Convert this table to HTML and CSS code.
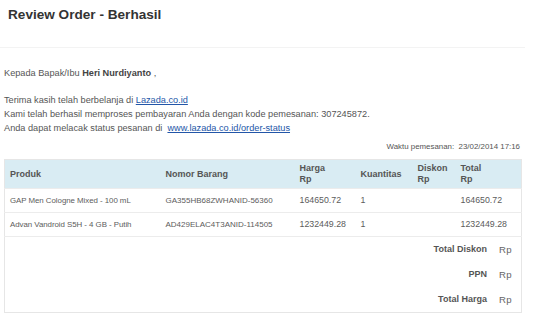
FILE: index.html
```html
<!DOCTYPE html>
<html>
<head>
<meta charset="utf-8">
<link rel="stylesheet" href="styles.css">
</head>
<body>
<div class="page">
  <h1 class="title">Review Order - Berhasil</h1>
  <div class="sep"></div>
  <p class="greet">Kepada Bapak/Ibu <b>Heri Nurdiyanto</b> ,</p>
  <p class="msg">Terima kasih telah berbelanja di <a href="#">Lazada.co.id</a><br>
  Kami telah berhasil memproses pembayaran Anda dengan kode pemesanan: 307245872.<br>
  Anda dapat melacak status pesanan di &nbsp;<a href="#">www.lazada.co.id/order-status</a></p>
  <div class="time">Waktu pemesanan: &nbsp;23/02/2014 17:16</div>
  <table class="order">
    <colgroup>
      <col class="c1"><col class="c2"><col class="c3"><col class="c4"><col class="c5"><col class="c6">
    </colgroup>
    <thead>
      <tr>
        <th>Produk</th>
        <th>Nomor Barang</th>
        <th>Harga<br>Rp</th>
        <th>Kuantitas</th>
        <th>Diskon<br>Rp</th>
        <th>Total<br>Rp</th>
      </tr>
    </thead>
    <tbody>
      <tr class="item">
        <td class="name">GAP Men Cologne Mixed - 100 mL</td>
        <td class="code">GA355HB68ZWHANID-56360</td>
        <td class="num">164650.72</td>
        <td class="num">1</td>
        <td></td>
        <td class="num tot">164650.72</td>
      </tr>
      <tr class="item">
        <td class="name">Advan Vandroid S5H - 4 GB - Putih</td>
        <td class="code">AD429ELAC4T3ANID-114505</td>
        <td class="num">1232449.28</td>
        <td class="num">1</td>
        <td></td>
        <td class="num tot">1232449.28</td>
      </tr>
      <tr class="sum first">
        <td colspan="6"><div class="sumrow"><span class="lbl">Total Diskon</span><span class="rp">Rp</span></div></td>
      </tr>
      <tr class="sum">
        <td colspan="6"><div class="sumrow"><span class="lbl">PPN</span><span class="rp">Rp</span></div></td>
      </tr>
      <tr class="sum last">
        <td colspan="6"><div class="sumrow"><span class="lbl">Total Harga</span><span class="rp">Rp</span></div></td>
      </tr>
    </tbody>
  </table>
</div>
</body>
</html>
```
FILE: styles.css
```css
html, body {
  margin: 0;
  padding: 0;
  background: #fff;
}
body {
  font-family: "Liberation Sans", Arial, sans-serif;
  color: #555;
  font-size: 9.2px;
}
.page {
  padding: 0 4px;
  width: 517px;
}
.title {
  margin: 0;
  padding: 7px 0 0 4px;
  font-size: 13.6px;
  line-height: 15px;
  color: #333;
  font-weight: bold;
}
.sep {
  margin: 25px -4px 0;
  height: 1px;
  background: #f3f3f3;
}
.greet {
  margin: 18px 0 0;
  line-height: 14px;
}
.greet b {
  color: #444;
}
.msg {
  margin: 13px 0 0;
  line-height: 14px;
}
.msg a {
  color: #2356a8;
  text-decoration: underline;
}
.time {
  margin-top: 6px;
  text-align: right;
  font-size: 7.9px;
  line-height: 12px;
  padding-right: 1px;
}
.order {
  margin-top: 6px;
  width: 517px;
  border-collapse: collapse;
  border: 1px solid #e6e6e6;
  font-size: 9px;
  table-layout: fixed;
}
.c1 { width: 156px; }
.c2 { width: 134px; }
.c3 { width: 61px; }
.c4 { width: 57px; }
.c5 { width: 43px; }
.c6 { width: 66px; }
.order th {
  background: #d9ecf3;
  text-align: left;
  font-weight: bold;
  color: #555;
  padding: 3px 5px;
  line-height: 11px;
  height: 22px;
  font-size: 9px;
}
.order td {
  padding: 0 5px;
  height: 23px;
  border-top: 1px solid #ececec;
  line-height: 11px;
  white-space: nowrap;
  color: #5c5c5c;
}
.order td.name {
  font-size: 7.9px;
  letter-spacing: -0.05px;
}
.order td.code {
  font-size: 8px;
}
.order td.num {
  font-size: 8.8px;
}
.order td.tot {
  padding-left: 5px;
}
.sum td {
  border-top: none;
  height: 25px;
}
.sum.first td {
  border-top: 1px solid #ececec;
}
.sumrow {
  display: flex;
  justify-content: flex-end;
  align-items: center;
}
.lbl {
  font-weight: bold;
  color: #555;
  font-size: 9px;
}
.rp {
  font-size: 9.6px;
  letter-spacing: 0.4px;
  margin-left: 12px;
  margin-right: 4px;
  color: #666;
}
```
